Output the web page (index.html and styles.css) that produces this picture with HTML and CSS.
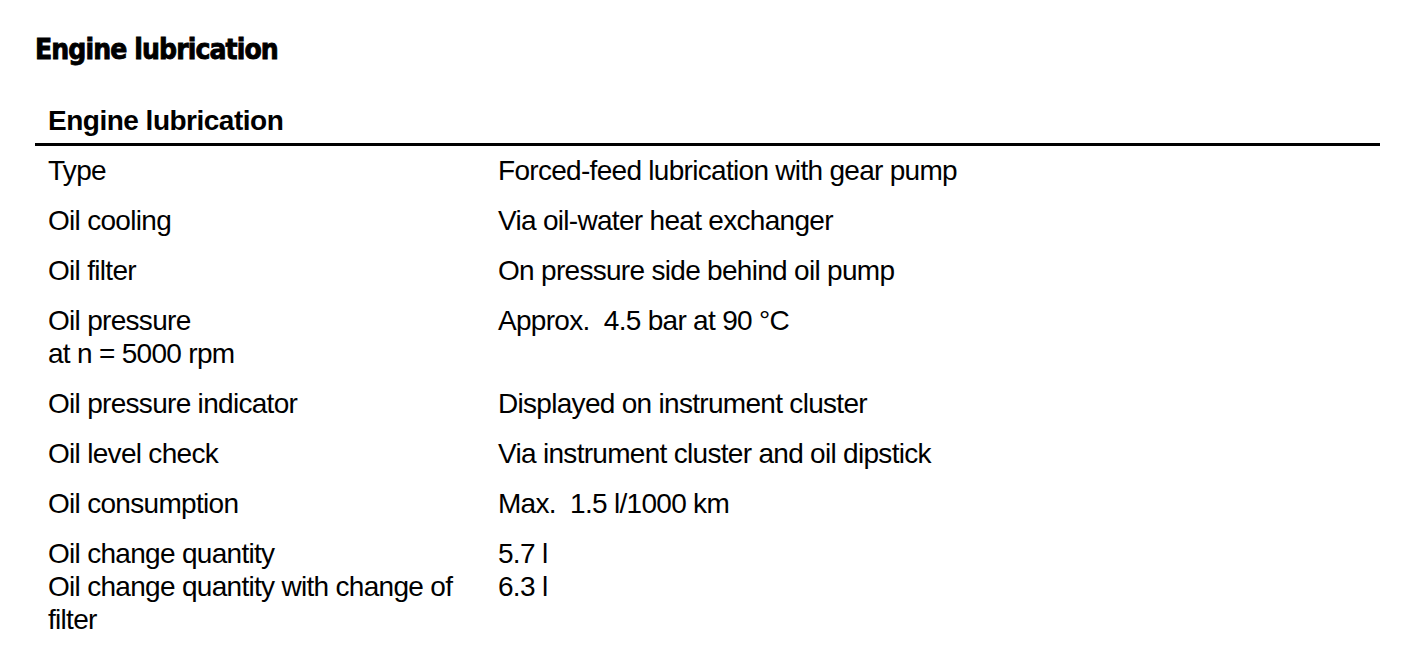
FILE: index.html
```html
<!DOCTYPE html>
<html lang="en">
<head>
<meta charset="utf-8">
<title>Engine lubrication</title>
<link rel="stylesheet" href="styles.css">
</head>
<body>
<div class="page">
  <h1 class="title">Engine lubrication</h1>
  <section class="spec">
    <h2 class="spec-head">Engine lubrication</h2>
    <div class="spec-rows">
      <div class="row"><div class="label">Type</div><div class="value">Forced-feed lubrication with gear pump</div></div>
      <div class="row"><div class="label">Oil cooling</div><div class="value">Via oil-water heat exchanger</div></div>
      <div class="row"><div class="label">Oil filter</div><div class="value">On pressure side behind oil pump</div></div>
      <div class="row"><div class="label">Oil pressure<br>at n = 5000 rpm</div><div class="value">Approx.&nbsp; 4.5 bar at 90 °C</div></div>
      <div class="row"><div class="label">Oil pressure indicator</div><div class="value">Displayed on instrument cluster</div></div>
      <div class="row"><div class="label">Oil level check</div><div class="value">Via instrument cluster and oil dipstick</div></div>
      <div class="row"><div class="label">Oil consumption</div><div class="value">Max.&nbsp; 1.5 l/1000 km</div></div>
      <div class="row"><div class="label">Oil change quantity<br>Oil change quantity with change of filter</div><div class="value">5.7 l<br>6.3 l</div></div>
    </div>
  </section>
</div>
</body>
</html>
```
FILE: styles.css
```css
html, body {
  margin: 0;
  padding: 0;
  background: #fff;
  color: #000;
}
.page {
  padding: 30px 28px 0 35px;
  width: 1345px;
  font-family: "Liberation Sans", Arial, sans-serif;
}
.title {
  margin: 0;
  font-family: "DejaVu Sans Condensed", "DejaVu Sans", sans-serif;
  font-stretch: condensed;
  font-weight: 900;
  font-size: 28px;
  line-height: 40px;
  letter-spacing: -0.9px;
  -webkit-text-stroke: 0.8px #000;
}
.spec {
  margin-top: 33px;
}
.spec-head {
  margin: 0;
  padding: 0 0 4px 13px;
  font-size: 28px;
  font-weight: 700;
  line-height: 36px;
  letter-spacing: -0.5px;
  border-bottom: 3px solid #000;
}
.spec-rows {
  display: flex;
  flex-direction: column;
}
.row {
  display: grid;
  grid-template-columns: 450px 1fr;
  padding: 8px 0 9px 13px;
  font-size: 28px;
  line-height: 33px;
  letter-spacing: -0.7px;
}
.label {
  padding-right: 20px;
}
```
